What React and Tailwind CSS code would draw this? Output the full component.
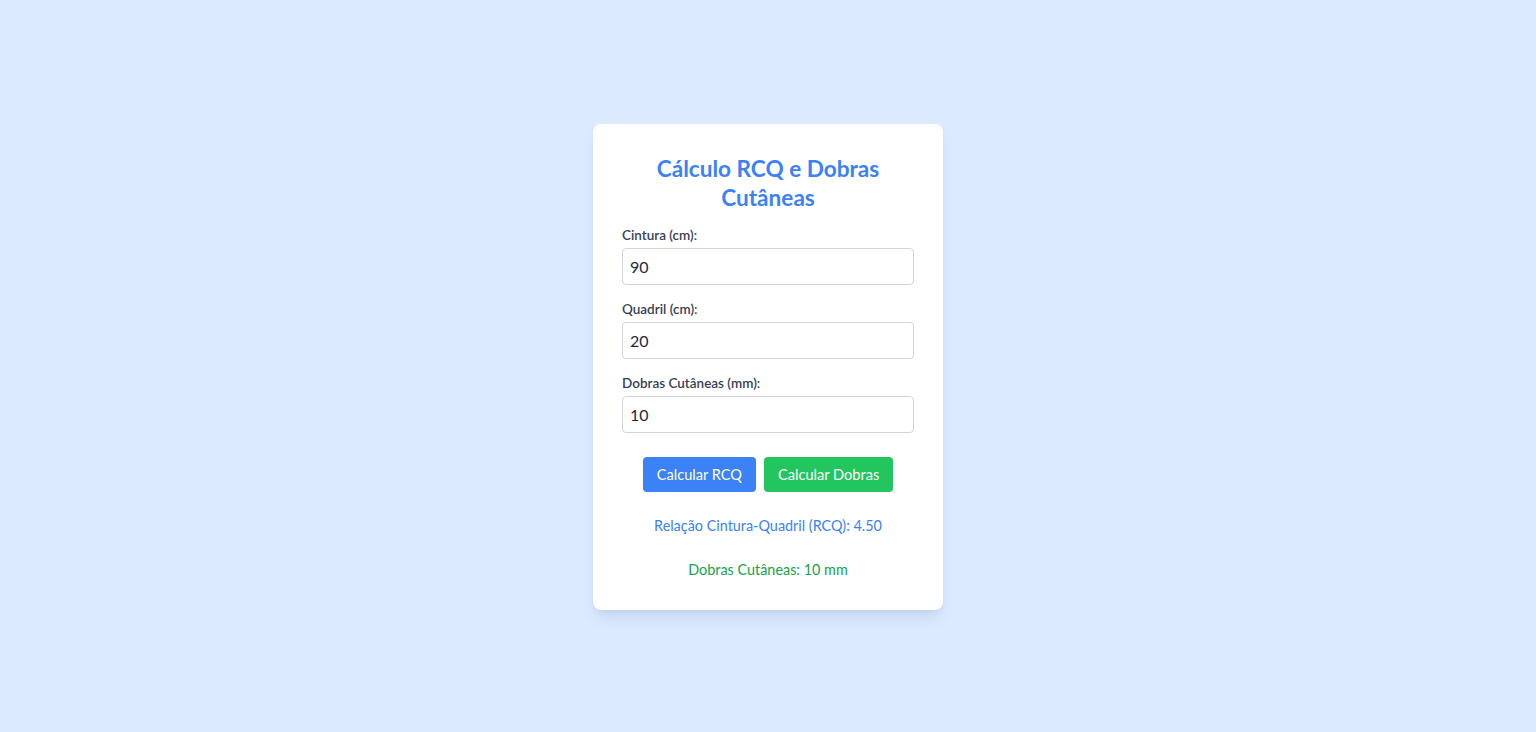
import React, { useState } from 'react';

const fields = [
  { id: 'cintura', label: 'Cintura (cm):', value: '90' },
  { id: 'quadril', label: 'Quadril (cm):', value: '20' },
  { id: 'dobras', label: 'Dobras Cutâneas (mm):', value: '10' },
];

export default function App() {
  const [values, setValues] = useState({ cintura: '90', quadril: '20', dobras: '10' });

  const rcq = (parseFloat(values.cintura) / parseFloat(values.quadril)).toFixed(2);

  return (
    <div
      className="min-h-screen bg-[#dbeafe] flex items-center justify-center pt-px"
      style={{ fontFamily: '"Segoe UI", Lato, "Noto Sans", sans-serif' }}
    >
      <div className="w-[350px] bg-white rounded-lg shadow-lg shadow-blue-900/10 px-[29px] pt-[30px] pb-[30px]">
        <h2 className="text-[22.6px] leading-[29px] font-bold text-[#3b82f6] text-center mb-[15px]">
          Cálculo RCQ e Dobras Cutâneas
        </h2>

        {fields.map((f) => (
          <div key={f.id} className="mb-4">
            <label htmlFor={f.id} className="block text-[13.5px] leading-[17px] font-semibold text-[#374151] mb-[4px]">
              {f.label}
            </label>
            <input
              id={f.id}
              type="number"
              value={values[f.id]}
              onChange={(e) => setValues({ ...values, [f.id]: e.target.value })}
              className="w-full h-[37px] border border-[#d1d5db] rounded px-[7px] text-[16px] text-[#1f2937] outline-none"
            />
          </div>
        ))}

        <div className="flex justify-center gap-2 mt-6">
          <button className="bg-[#3b82f6] text-white text-[14.6px] leading-[19px] px-[14px] py-2 rounded">
            Calcular RCQ
          </button>
          <button className="bg-[#22c55e] text-white text-[14.6px] leading-[19px] px-[14px] py-2 rounded">
            Calcular Dobras
          </button>
        </div>

        <p className="mt-[24px] text-center text-[14.4px] leading-[20px] text-[#3b82f6]">
          Relação Cintura-Quadril (RCQ): {rcq}
        </p>
        <p className="mt-[24px] text-center text-[14.4px] leading-[20px] text-[#16a34a]">
          Dobras Cutâneas: {values.dobras} mm
        </p>
      </div>
    </div>
  );
}
